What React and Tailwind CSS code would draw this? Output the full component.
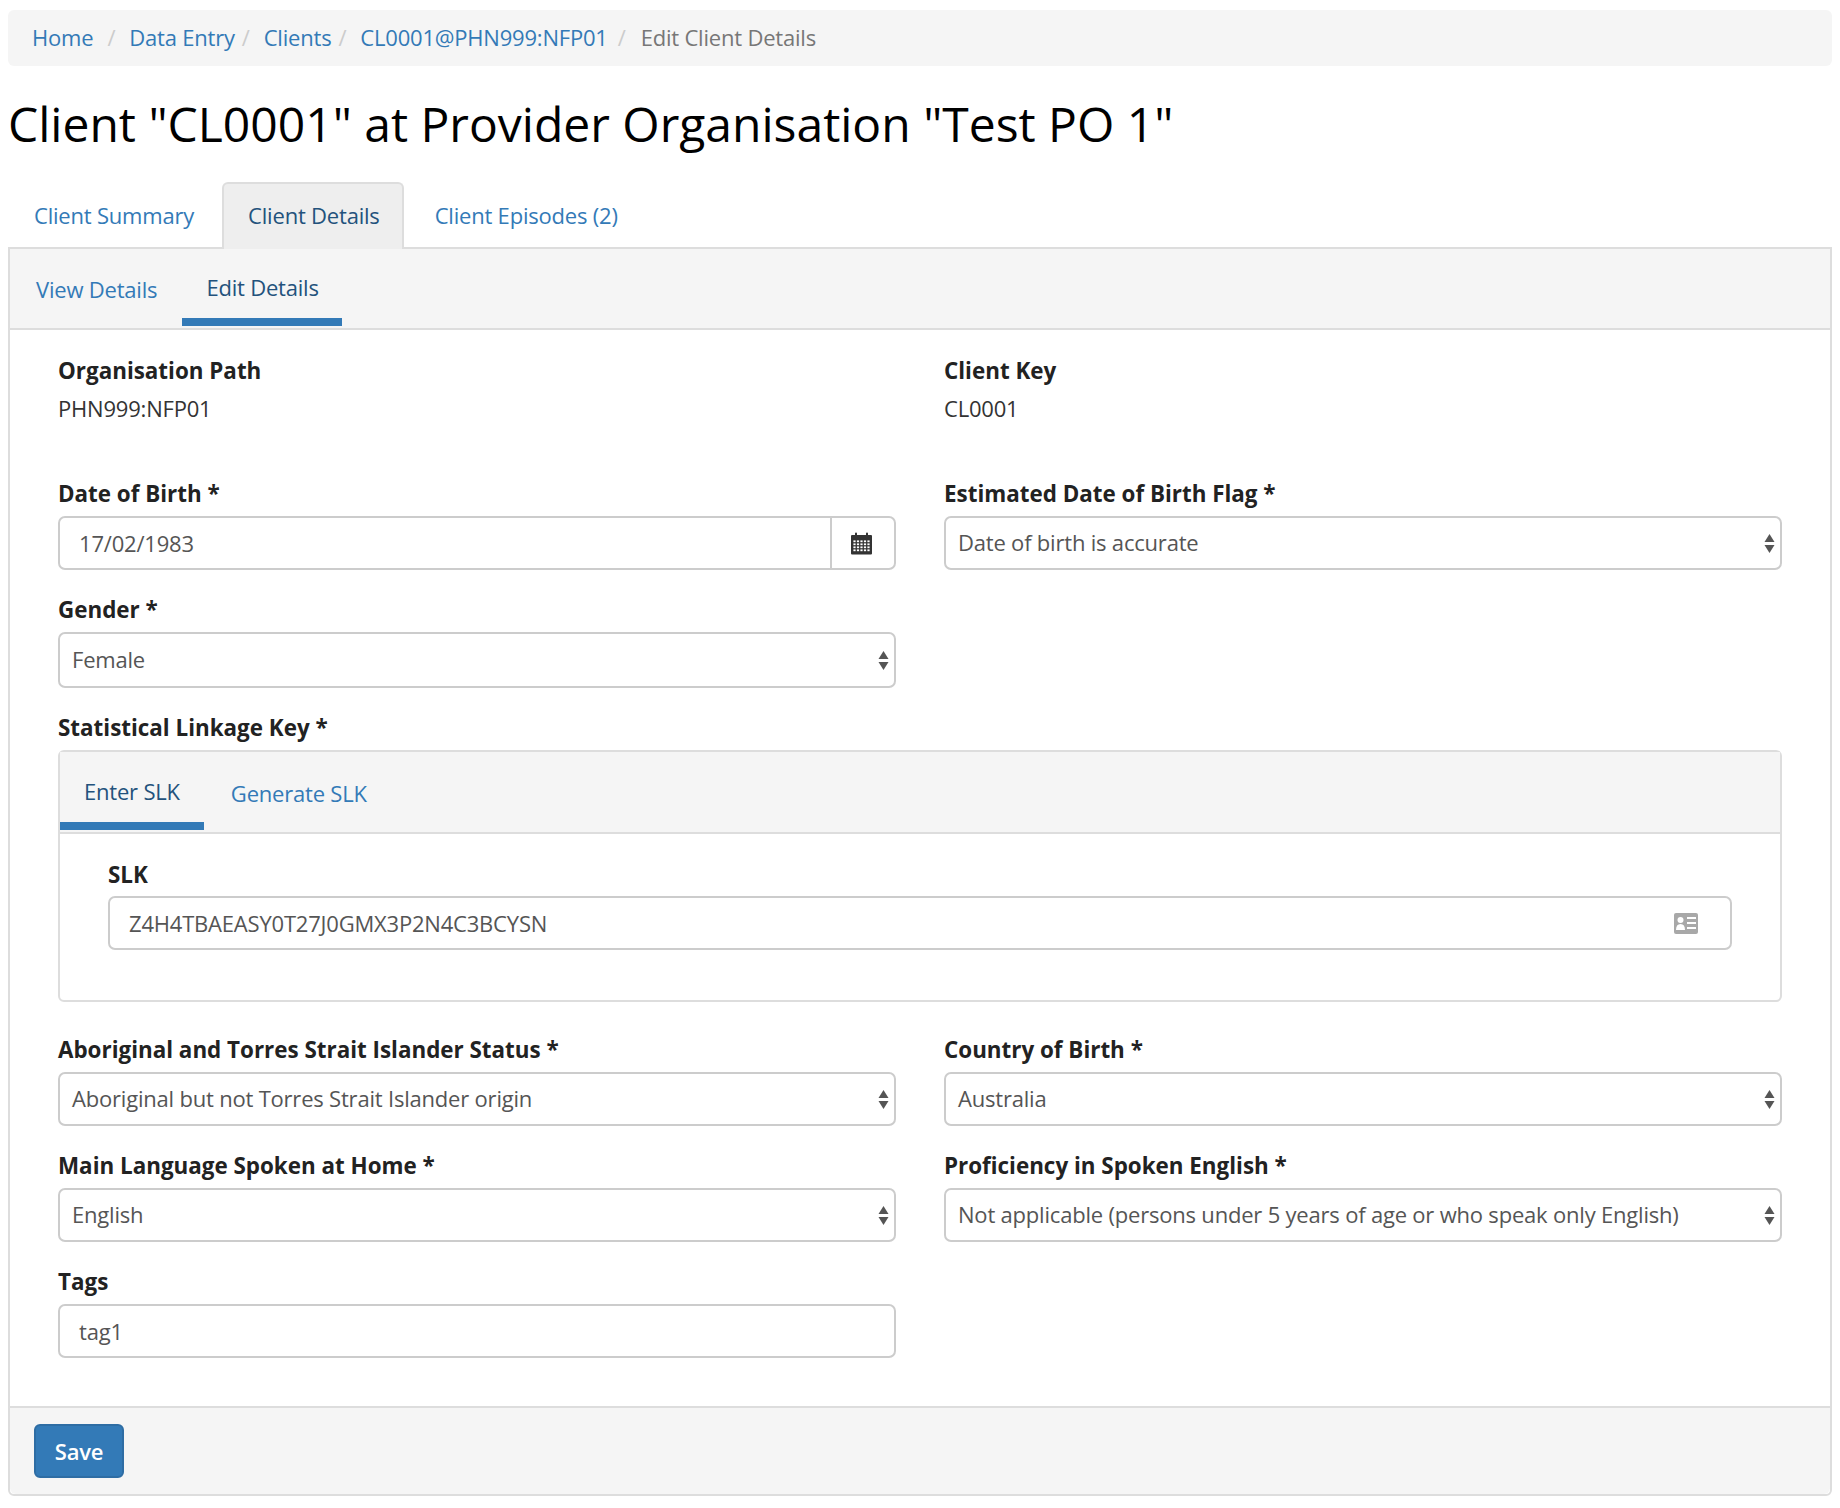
import React from 'react';

const linkBlue = 'text-[#337ab7]';

function Label({ children }) {
    return <div className="h-[24px] pt-[1px] leading-[23px] font-bold text-[#222] text-[22.4px] tracking-normal mb-[11px]">{children}</div>;
}

function CalendarIcon() {
    const cells = [];
    for (let r = 0; r < 4; r++) {
        for (let c = 0; c < 5; c++) {
            cells.push(<rect key={`${r}-${c}`} x={2.4 + c * 3.5} y={8.4 + r * 3} width="2.2" height="1.8" fill="#fff" />);
        }
    }
    return (
        <svg width="21" height="23" viewBox="0 0 21 23">
            <path d="M1 3h3V1.500a1 1 0 0 1 2 0V3h9V1.500a1 1 0 0 1 2 0V3h3a1 1 0 0 1 1 1v17.500a1 1 0 0 1-1 1H1a1 1 0 0 1-1-1V4a1 1 0 0 1 1-1z" fill="#333" />
            {cells}
        </svg>
    );
}

function CardIcon() {
    return (
        <svg width="24" height="21" viewBox="0 0 24 21">
            <rect width="24" height="21" rx="2" fill="#a8a8a8" />
            <circle cx="6.500" cy="7" r="3" fill="#fff" />
            <path d="M2 17c0-4 1.500-6 4.500-6s4.500 2 4.500 6z" fill="#fff" />
            <rect x="13" y="4" width="9" height="2" fill="#fff" />
            <rect x="13" y="9" width="9" height="2" fill="#fff" />
            <rect x="13" y="14" width="9" height="2" fill="#fff" />
        </svg>
    );
}

function Select({ value, tall }) {
    return (
        <div className={`flex items-center justify-between border-2 border-[#ccc] rounded-[7px] pl-[12px] pr-[5px] bg-white text-[#555] ${tall ? 'h-[56px]' : 'h-[54px]'}`}>
            <span className="-mt-[2px]">{value}</span>
            <svg width="11" height="21" viewBox="0 0 11 21">
                <path d="M5.500 1L10.500 9H.5zM.5 12h10l-5 8z" fill="#555" />
            </svg>
        </div>
    );
}

function Input({ value }) {
    return <div className="flex items-center h-[54px] border-2 border-[#ccc] rounded-[7px] pl-[19px] pb-[1px] bg-white text-[#555]">{value}</div>;
}

export default function App() {
    return (
        <div className="w-[1840px] h-[1508px] bg-white px-[8px] pt-[10px] text-[22px] leading-[32px] font-['Open_Sans',sans-serif] text-[#333] tracking-[-0.2px]">
            <div className="h-[56px] flex items-center pl-[24px] pb-[2px] bg-[#f5f5f5] rounded-[6px] text-[#999]">
                <span className={linkBlue}>Home</span>
                <span className="text-[#ccc] ml-[14px] mr-[14px]">/</span>
                <span className={linkBlue}>Data Entry</span>
                <span className="text-[#ccc] ml-[7px] mr-[14px]">/</span>
                <span className={linkBlue}>Clients</span>
                <span className="text-[#ccc] ml-[7px] mr-[14px]">/</span>
                <span className={linkBlue}>CL0001@PHN999:NFP01</span>
                <span className="text-[#ccc] ml-[10px] mr-[15px]">/</span>
                <span className="text-[#777]">Edit Client Details</span>
            </div>

            <h1 className="h-[116px] pt-[19px] leading-[78px] text-[48px] text-black tracking-normal">Client "CL0001" at Provider Organisation "Test PO 1"</h1>

            <div className="flex h-[65px]">
                <div className={`${linkBlue} pl-[26px] pr-[29px] pt-[17px]`}>Client Summary</div>
                <div className="relative z-10 h-[67px] pl-[24px] pr-[22px] pt-[15px] -ml-[1px] bg-[#eee] border-2 border-b-0 border-[#ddd] rounded-t-[6px] text-[#23527c]">Client Details</div>
                <div className={`${linkBlue} pl-[31px] pt-[17px]`}>Client Episodes (2)</div>
            </div>

            <div className="h-[1249px] border-2 border-[#ddd] rounded-b-[6px]">
                <div className="flex h-[81px] bg-[#f5f5f5] border-b-2 border-[#ddd]">
                    <div className={`${linkBlue} pl-[26px] pr-[25px] pt-[24px]`}>View Details</div>
                    <div className="h-[77px] pl-[24px] pr-[23px] pt-[22px] text-[#23527c] border-b-[8px] border-[#337ab7]">Edit Details</div>
                </div>

                <div className="h-[1076px] px-[48px] pt-[28px]">
                    <div className="grid grid-cols-[838px_838px] gap-x-[48px]">
                        <div className="h-[96px]">
                            <Label>Organisation Path</Label>
                            <div className="-mt-[1px]">PHN999:NFP01</div>
                        </div>
                        <div className="h-[96px]">
                            <Label>Client Key</Label>
                            <div className="-mt-[1px]">CL0001</div>
                        </div>
                    </div>

                    <div className="grid grid-cols-[838px_838px] gap-x-[48px] mt-[27px]">
                        <div>
                            <Label>Date of Birth *</Label>
                            <div className="flex h-[54px] border-2 border-[#ccc] rounded-[7px] text-[#555]">
                                <div className="flex-1 flex items-center pl-[19px] pb-[1px] border-r-2 border-[#ccc]">17/02/1983</div>
                                <div className="w-[62px] pr-[3px] flex items-center justify-center"><CalendarIcon /></div>
                            </div>
                        </div>
                        <div>
                            <Label>Estimated Date of Birth Flag *</Label>
                            <Select value="Date of birth is accurate" />
                        </div>
                    </div>

                    <div className="grid grid-cols-[838px_838px] gap-x-[48px] mt-[27px]">
                        <div>
                            <Label>Gender *</Label>
                            <Select value="Female" tall />
                        </div>
                    </div>

                    <div className="mt-[27px]">
                        <Label>Statistical Linkage Key *</Label>
                        <div className="h-[252px] border-2 border-[#ddd] rounded-[6px]">
                            <div className="flex h-[82px] bg-[#f5f5f5] border-b-2 border-[#ddd]">
                                <div className="h-[78px] px-[24px] pt-[23px] text-[#23527c] border-b-[8px] border-[#337ab7]">Enter SLK</div>
                                <div className={`${linkBlue} pl-[27px] pt-[25px]`}>Generate SLK</div>
                            </div>
                            <div className="px-[48px] pt-[28px]">
                                <Label>SLK</Label>
                                <div className="flex items-center justify-between h-[54px] -mt-[1px] border-2 border-[#ccc] rounded-[7px] pl-[19px] pr-[32px] text-[#555]">
                                    <span>Z4H4TBAEASY0T27J0GMX3P2N4C3BCYSN</span>
                                    <CardIcon />
                                </div>
                            </div>
                        </div>
                    </div>

                    <div className="grid grid-cols-[838px_838px] gap-x-[48px] gap-y-[27px] mt-[35px]">
                        <div>
                            <Label>Aboriginal and Torres Strait Islander Status *</Label>
                            <Select value="Aboriginal but not Torres Strait Islander origin" />
                        </div>
                        <div>
                            <Label>Country of Birth *</Label>
                            <Select value="Australia" />
                        </div>
                        <div>
                            <Label>Main Language Spoken at Home *</Label>
                            <Select value="English" />
                        </div>
                        <div>
                            <Label>Proficiency in Spoken English *</Label>
                            <Select value="Not applicable (persons under 5 years of age or who speak only English)" />
                        </div>
                        <div>
                            <Label>Tags</Label>
                            <Input value="tag1" />
                        </div>
                    </div>
                </div>

                <div className="h-[88px] bg-[#f5f5f5] border-t-2 border-[#ddd] rounded-b-[6px] pl-[24px] pt-[16px]">
                    <div className="w-[90px] h-[54px] flex items-center justify-center bg-[#337ab7] border-2 border-[#2e6da4] rounded-[6px] text-white font-semibold">Save</div>
                </div>
            </div>
        </div>
    );
}
